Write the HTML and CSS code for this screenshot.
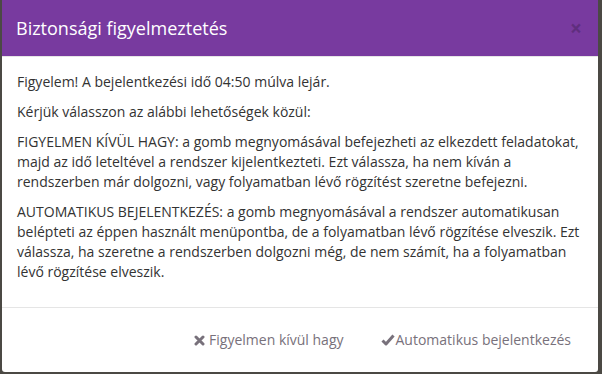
FILE: index.html
```html
<!DOCTYPE html>
<html lang="hu">
    <head>
        <meta charset="UTF-8" />
        <meta name="viewport" content="width=device-width, initial-scale=1.0" />
        <title>Biztonsági figyelmeztetés</title>
        <link rel="stylesheet" href="styles.css">
    </head>
    <body>
        <div class="modal">
            <div class="modal-header">
                <span class="close">&times;</span>
                <h4 class="modal-title">Biztonsági figyelmeztetés</h4>
            </div>
            <div class="modal-body">
                <p>Figyelem! A bejelentkezési idő 04:50 múlva lejár.</p>
                <p>Kérjük válasszon az alábbi lehetőségek közül:</p>
                <p>
                    FIGYELMEN KÍVÜL HAGY: a gomb megnyomásával befejezheti az elkezdett feladatokat,
                    majd az idő leteltével a rendszer kijelentkezteti. Ezt válassza, ha nem kíván a
                    rendszerben már dolgozni, vagy folyamatban lévő rögzítést szeretne befejezni.
                </p>
                <p>
                    AUTOMATIKUS BEJELENTKEZÉS: a gomb megnyomásával a rendszer automatikusan
                    belépteti az éppen használt menüpontba, de a folyamatban lévő rögzítése elveszik. Ezt
                    válassza, ha szeretne a rendszerben dolgozni még, de nem számít, ha a folyamatban
                    lévő rögzítése elveszik.
                </p>
            </div>
            <div class="modal-footer">
                <button class="btn-link" id="ignoreButton">
                    <svg class="icon" width="11" height="11" viewBox="0 0 11 11">
                        <path d="M2 2 L9 9 M9 2 L2 9" stroke="currentColor" stroke-width="3" stroke-linecap="round" fill="none" />
                    </svg>
                    Figyelmen kívül hagy
                </button>
                <button class="btn-link" id="loginButton">
                    <svg class="icon icon-ok" width="14" height="12" viewBox="0 0 14 12">
                        <path d="M1.5 6.5 L5 10 L12.5 1.5" stroke="currentColor" stroke-width="3" stroke-linejoin="round" fill="none" />
                    </svg>Automatikus bejelentkezés
                </button>
            </div>
        </div>
    </body>
</html>
```

FILE: styles.css
```css
body {
    margin: 0;
    padding: 0 4px 2px 2px;
    background-color: #4b4944;
    font-family: "Open Sans", "Noto Sans", sans-serif;
    font-size: 14px;
    line-height: 20px;
    color: #333;
}
.modal {
    background-color: #fff;
    border-radius: 0 0 3px 3px;
    overflow: hidden;
}
.modal-header {
    background-color: #783a9f;
    padding: 15px 15px 15px 14px;
    border-bottom: 1px solid #e5e5e5;
}
.modal-title {
    margin: 0;
    font-size: 18px;
    font-weight: normal;
    line-height: 26px;
    color: #fff;
}
.close {
    float: right;
    font-size: 21px;
    font-weight: bold;
    line-height: 26px;
    color: #000;
    opacity: 0.2;
    margin-right: 1px;
}
.modal-body {
    padding: 15px;
}
.modal-body p {
    margin: 0 0 10px;
}
.modal-footer {
    border-top: 1px solid #e5e5e5;
    padding: 15px;
    display: flex;
    justify-content: flex-end;
    gap: 13px;
}
.btn-link {
    font-family: inherit;
    font-size: 14px;
    line-height: 20px;
    padding: 7px 12px;
    border: none;
    background: none;
    color: #78717b;
    cursor: pointer;
}
.icon {
    vertical-align: -1px;
}
.icon-ok {
    margin-right: 1px;
}
```
